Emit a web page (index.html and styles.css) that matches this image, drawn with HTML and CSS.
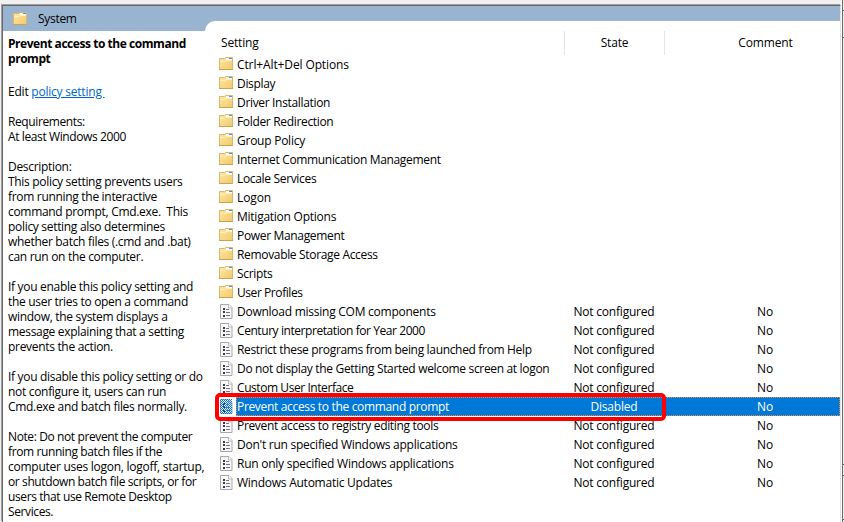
FILE: index.html
```html
<!DOCTYPE html>
<html lang="en">
<head>
<meta charset="utf-8">
<title>System</title>
<link rel="stylesheet" href="styles.css">
</head>
<body>
<svg width="0" height="0" class="defs">
  <defs>
    <linearGradient id="gold" x1="0" y1="0" x2="1" y2="1"><stop offset="0" stop-color="#ffe9a6"/><stop offset="1" stop-color="#f0c869"/></linearGradient>
    <pattern id="dither" width="2" height="2" patternUnits="userSpaceOnUse"><path d="M0 0h1v1H0zM1 1h1v1H1z" fill="#0078d7"/></pattern>
    <symbol id="folder" viewBox="0 0 16 16">
      <path d="M1.5 2.5h5l1-1h7v12h-13z" fill="url(#gold)" stroke="#dcb767"/>
      <path d="M8 2h6v2H8z" fill="#fff"/><path d="M11 2h3v1h-3z" fill="#4a94d8"/>
      <path d="M2 5.500h5l1-1h6" fill="none" stroke="#fff0bd"/>
      <path d="M1 13.5h14" stroke="#cda34e"/>
    </symbol>
    <symbol id="policy" viewBox="0 0 16 16">
      <path d="M2.500 1.500h8.500l3 3v11h-11.500z" fill="#f8f8f8" stroke="#a8a8a8"/>
      <path d="M10.500 1.500v3.500h3.500" fill="#fff" stroke="#b9b9b9"/>
      <path d="M5 5h2v2H5zM5 8h2v2H5zM5 12h2v2H5z" fill="#38384a"/>
      <path d="M8 6.500h3M8 9.500h4M8 12.500h4" stroke="#77728a"/>
    </symbol>
  </defs>
</svg>
<div class="window">
  <header class="title"><svg class="title-icon"><use href="#folder"/></svg><span>System</span></header>
  <div class="content">
    <aside>
      <h1>Prevent access to the command<br>prompt</h1>
      <p class="edit">Edit <a href="#">policy setting&nbsp;</a></p>
      <p class="tight">Requirements:<br>At least Windows 2000</p>
      <p>Description:<br>This policy setting prevents users<br>from running the interactive<br>command prompt, Cmd.exe.&nbsp; This<br>policy setting also determines<br>whether batch files (.cmd and .bat)<br>can run on the computer.</p>
      <p>If you enable this policy setting and<br>the user tries to open a command<br>window, the system displays a<br>message explaining that a setting<br>prevents the action.</p>
      <p>If you disable this policy setting or do<br>not configure it, users can run<br>Cmd.exe and batch files normally.</p>
      <p class="tight">Note: Do not prevent the computer<br>from running batch files if the<br><span class="loose">computer uses logon, logoff, startup,</span><br>or shutdown batch file scripts, or for<br>users that use Remote Desktop<br>Services.</p>
    </aside>
    <main>
      <div class="head"><span>Setting</span><span>State</span><span>Comment</span></div>
      <div class="row wide"><svg><use href="#folder"/></svg><span>Ctrl+Alt+Del Options</span></div>
      <div class="row"><svg><use href="#folder"/></svg><span>Display</span></div>
      <div class="row"><svg><use href="#folder"/></svg><span>Driver Installation</span></div>
      <div class="row"><svg><use href="#folder"/></svg><span>Folder Redirection</span></div>
      <div class="row medium"><svg><use href="#folder"/></svg><span>Group Policy</span></div>
      <div class="row"><svg><use href="#folder"/></svg><span>Internet Communication Management</span></div>
      <div class="row"><svg><use href="#folder"/></svg><span>Locale Services</span></div>
      <div class="row wide"><svg><use href="#folder"/></svg><span>Logon</span></div>
      <div class="row medium"><svg><use href="#folder"/></svg><span>Mitigation Options</span></div>
      <div class="row"><svg><use href="#folder"/></svg><span>Power Management</span></div>
      <div class="row"><svg><use href="#folder"/></svg><span>Removable Storage Access</span></div>
      <div class="row"><svg><use href="#folder"/></svg><span>Scripts</span></div>
      <div class="row narrow"><svg><use href="#folder"/></svg><span>User Profiles</span></div>
      <div class="row medium"><svg><use href="#policy"/></svg><span>Download missing COM components</span><span>Not configured</span><span>No</span></div>
      <div class="row narrow"><svg><use href="#policy"/></svg><span>Century interpretation for Year 2000</span><span>Not configured</span><span>No</span></div>
      <div class="row"><svg><use href="#policy"/></svg><span>Restrict these programs from being launched from Help</span><span>Not configured</span><span>No</span></div>
      <div class="row"><svg><use href="#policy"/></svg><span>Do not display the Getting Started welcome screen at logon</span><span>Not configured</span><span>No</span></div>
      <div class="row narrow"><svg><use href="#policy"/></svg><span>Custom User Interface</span><span>Not configured</span><span>No</span></div>
      <div class="row selected"><svg><use href="#policy"/><path d="M2 1h12v15H2z" fill="url(#dither)"/></svg><span>Prevent access to the command prompt</span><span>Disabled</span><span>No</span><i class="outline"></i></div>
      <div class="row"><svg><use href="#policy"/></svg><span>Prevent access to registry editing tools</span><span>Not configured</span><span>No</span></div>
      <div class="row medium"><svg><use href="#policy"/></svg><span>Don't run specified Windows applications</span><span>Not configured</span><span>No</span></div>
      <div class="row medium"><svg><use href="#policy"/></svg><span>Run only specified Windows applications</span><span>Not configured</span><span>No</span></div>
      <div class="row medium"><svg><use href="#policy"/></svg><span>Windows Automatic Updates</span><span>Not configured</span><span>No</span></div>
    </main>
  </div>
</div>
<div class="edge"><i></i><i></i><i></i><i></i><i></i></div>
</body>
</html>
```
FILE: styles.css
```css
* { box-sizing: border-box; }
body { margin: 0; width: 844px; height: 522px; overflow: hidden; display: flex; background: #f0f0f0; color: #000; font: 12px/15px "Open Sans", "Noto Sans", sans-serif; letter-spacing: -.16px; white-space: nowrap; }
.defs { position: absolute; }
.window { flex: none; width: 839px; height: 517px; margin: 5px 0 0 2px; border: solid #696969; border-width: 1px 0 0 1px; border-right: 1px solid #e3e3e3; background: #fff; box-shadow: -1px -1px #a0a0a0; }
.title { height: 25px; background: #99b4d1; display: flex; align-items: center; padding: 1px 0 0 9px; gap: 10px; }
.title-icon { width: 16px; height: 16px; }
.title span { line-height: 18px; letter-spacing: -.3px; }
.content { display: flex; align-items: flex-start; }
aside { width: 202px; padding: 5px 0 0 5px; letter-spacing: -.31px; }
h1 { margin: 0 0 18px; font-size: 12px; line-height: 15px; letter-spacing: -.45px; }
p { margin: 0 0 15px; }
.edit { letter-spacing: -.22px; }
.tight { letter-spacing: -.39px; }
.loose { letter-spacing: -.26px; }
a { color: #0066cc; }
main { width: 635px; margin-top: -10px; padding-top: 10px; background: #fff; border-top-left-radius: 10px; }
.head, .row { display: grid; align-items: center; }
.head { height: 24px; grid-template-columns: 359px 100px 1fr; }
.head span { line-height: 24px; }
.head span:first-child { padding-left: 16px; }
.head span + span { text-align: center; border-left: 1px solid #e5e5e5; }
.head span:last-child, .row span:nth-of-type(3) { padding-left: 26px; }
.row { position: relative; height: 19px; grid-template-columns: 13px 19px 327px 100px 1fr; }
.row svg { grid-column: 2; width: 16px; height: 16px; align-self: start; margin-top: 1px; }
.row span { line-height: 19px; text-align: center; letter-spacing: -.21px; }
.row svg + span { text-align: left; letter-spacing: -.33px; }
.wide svg + span { letter-spacing: -.12px; }
.medium svg + span { letter-spacing: -.25px; }
.narrow svg + span { letter-spacing: -.43px; }
.selected { color: #fff; background: linear-gradient(#0078d7, #0078d7) 31px 0 no-repeat; }
.selected::after { content: ""; position: absolute; inset: 0 0 0 31px; border: 1px dotted #e58b3c; }
.outline { position: absolute; z-index: 2; left: 10px; top: -4px; width: 451px; height: 28px; border: 4px solid #fe0000; border-radius: 5px; }
.edge { position: relative; width: 3px; background: linear-gradient(90deg, #fff 1px, #696969 1px, #696969 2px, #f0f0f0 2px); }
.edge i { position: absolute; left: 2px; width: 1px; height: 1px; background: #555; }
.edge i:nth-child(1) { top: 10px; }
.edge i:nth-child(2) { top: 37px; }
.edge i:nth-child(3) { top: 464px; }
.edge i:nth-child(4) { top: 475px; }
.edge i:nth-child(5) { top: 519px; }
```
